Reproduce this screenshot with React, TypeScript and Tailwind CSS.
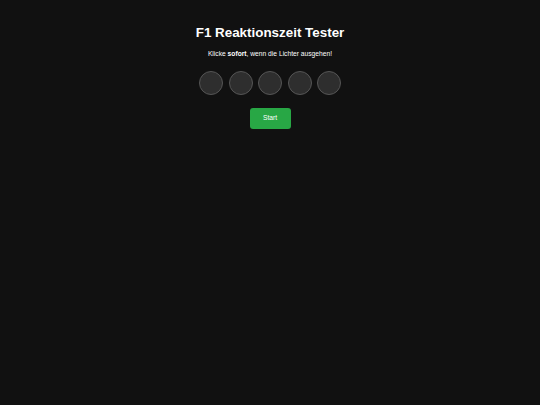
export default function App() {
  const lights = [0, 1, 2, 3, 4];
  return (
    <div className="min-h-[405px] w-full bg-[#111111] text-white" style={{ fontFamily: '"Liberation Sans", Arial, sans-serif' }}>
      <div className="flex flex-col items-center pt-[25px]">
        <h1 className="text-[13.4px] font-bold leading-[16px]">F1 Reaktionszeit Tester</h1>
        <p className="mt-[9px] text-[6.7px] leading-[8px]">
          Klicke <b>sofort</b>, wenn die Lichter ausgehen!
        </p>
        <div className="mt-[13px] flex gap-[5.5px]">
          {lights.map((i) => (
            <div key={i} className="h-[24px] w-[24px] rounded-full border border-[#555555] bg-[#2e2e2e]" />
          ))}
        </div>
        <button className="mt-[13px] h-[21px] w-[41px] rounded-[3px] bg-[#28a745] text-[6.7px] text-white">Start</button>
      </div>
    </div>
  );
}
